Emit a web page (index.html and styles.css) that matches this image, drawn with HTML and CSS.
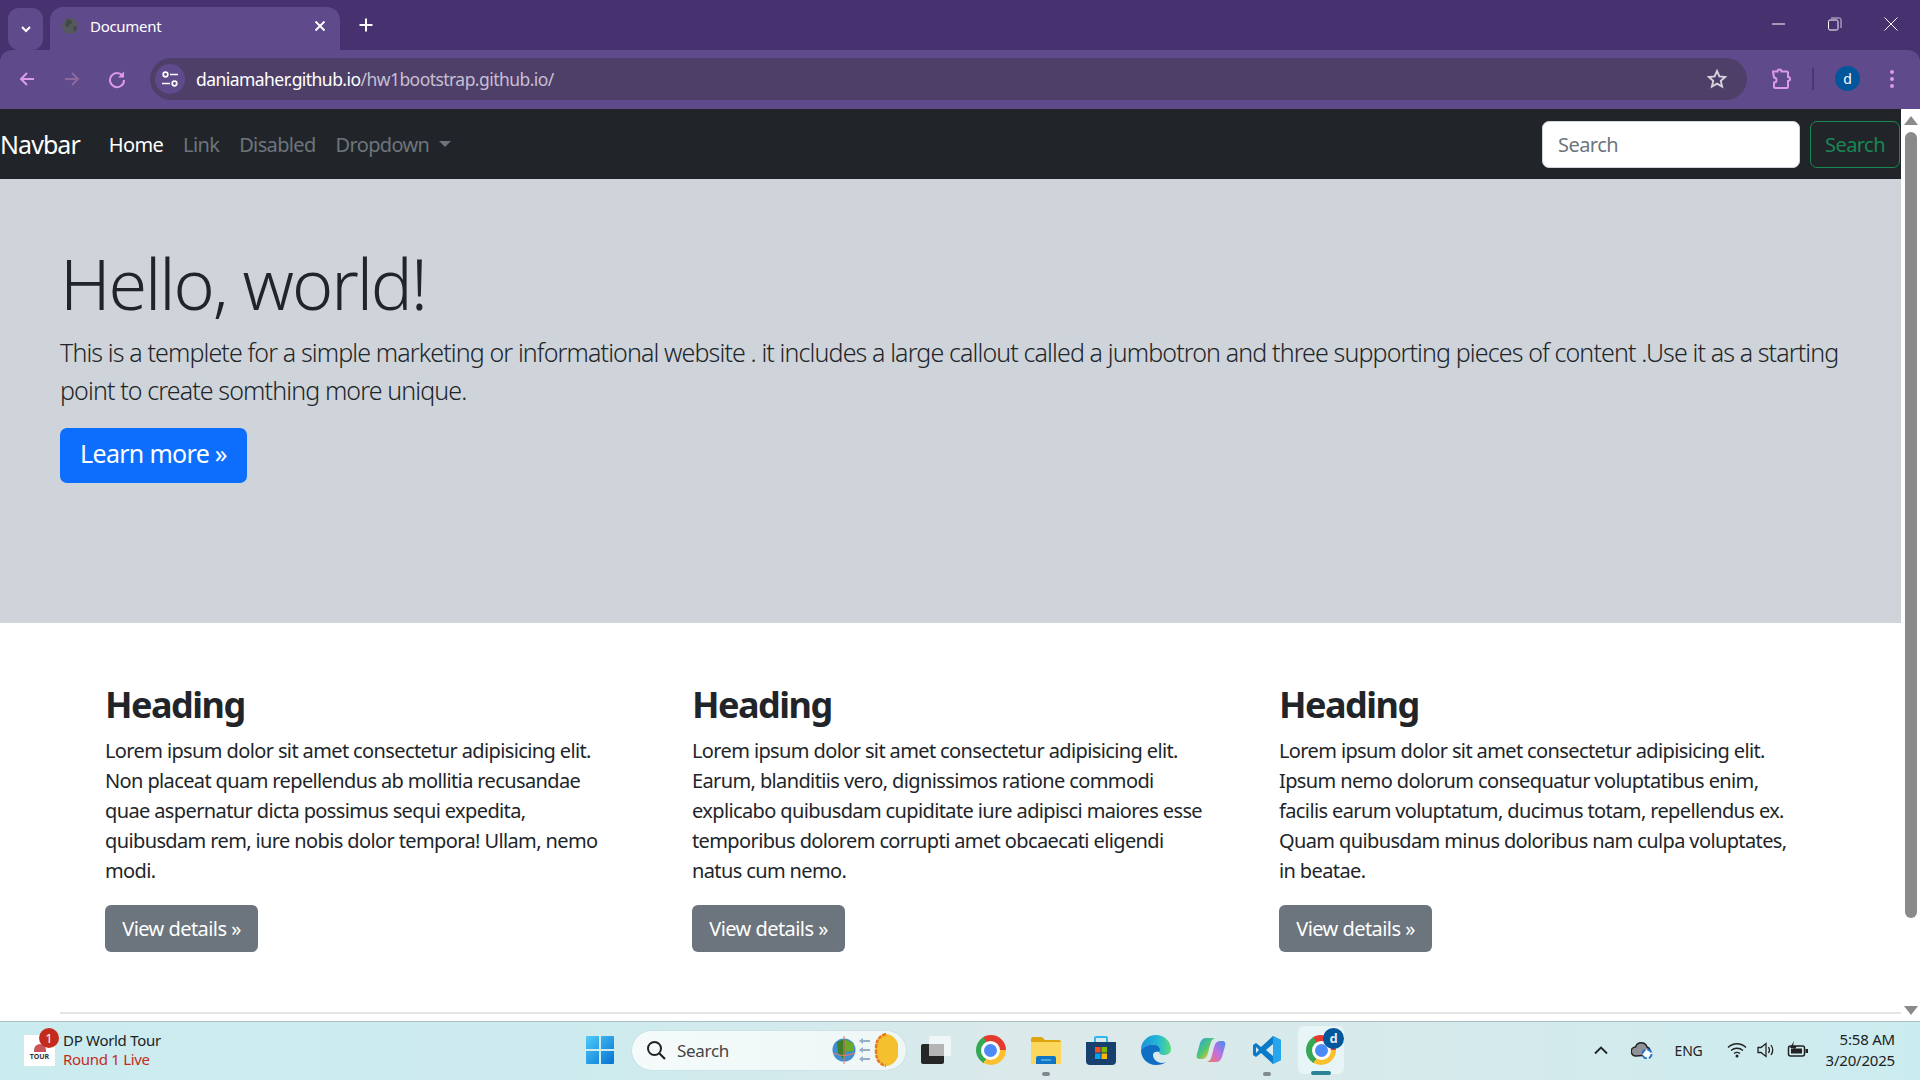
FILE: index.html
```html
<!DOCTYPE html>
<html lang="en">
<head>
<meta charset="utf-8">
<title>Document</title>
<link rel="stylesheet" href="styles.css">
</head>
<body>
<div class="window">
  <header class="tabstrip">
    <button class="tab-search"><svg width="14" height="14" viewBox="0 0 14 14"><path d="M3 5l4 4 4-4" fill="none" stroke="#fff" stroke-width="2"/></svg></button>
    <div class="tab">
      <svg class="favicon" width="18" height="18" viewBox="0 0 18 18"><circle cx="9" cy="9" r="8" fill="#55585c"/><path d="M6 2l4 1 1 3-3 2-1 3-3-3zM12 10l3-1 1 3-3 3z" fill="#3f4a48"/></svg>
      <span class="tab-title">Document</span>
      <svg class="tab-close" width="12" height="12" viewBox="0 0 12 12"><path d="M1.500 1.500l9 9M10.500 1.500l-9 9" stroke="#fff" stroke-width="1.800"/></svg>
    </div>
    <svg class="new-tab" width="16" height="16" viewBox="0 0 16 16"><path d="M8 1.500v13M1.500 8h13" stroke="#fff" stroke-width="2"/></svg>
    <div class="win-controls">
      <svg width="14" height="14" viewBox="0 0 14 14"><path d="M0 7h13" stroke="#fff" stroke-width="1"/></svg>
      <svg width="14" height="14" viewBox="0 0 14 14"><rect x=".5" y="3" width="9.500" height="10" rx="1.500" fill="none" stroke="#fff"/><path d="M3 1h8.500a1.500 1.500 0 0 1 1.500 1.500V11" fill="none" stroke="#cfc7dd"/></svg>
      <svg width="14" height="14" viewBox="0 0 14 14"><path d="M.5.500l13 13M13.500.500l-13 13" stroke="#fff" stroke-width="1"/></svg>
    </div>
  </header>

  <nav class="toolbar">
    <svg class="tool-icon" width="20" height="20" viewBox="0 0 20 20"><path d="M17 10H4M10 4l-6 6 6 6" fill="none" stroke="#dc9be6" stroke-width="2"/></svg>
    <svg class="tool-icon" width="20" height="20" viewBox="0 0 20 20"><path d="M3 10h13M10 4l6 6-6 6" fill="none" stroke="#8d689f" stroke-width="2"/></svg>
    <svg class="tool-icon" width="20" height="20" viewBox="0 0 20 20"><path d="M16 7.500A7 7 0 1 0 17 11" fill="none" stroke="#dc9be6" stroke-width="2"/><path d="M17 2.500v6h-6z" fill="#dc9be6"/></svg>
    <div class="omnibox">
      <span class="site-chip"><svg width="20" height="20" viewBox="0 0 20 20"><g fill="none" stroke="#fff" stroke-width="1.700"><circle cx="5.500" cy="5.500" r="2.300"/><circle cx="14.500" cy="14.500" r="2.300"/><path d="M10 5.500h8M2 14.500h8"/></g></svg></span>
      <span class="url">daniamaher.github.io<span class="url-path">/hw1bootstrap.github.io/</span></span>
      <svg class="star" width="22" height="22" viewBox="0 0 22 22"><path d="M11 3l2.400 5.400 5.800.6-4.400 3.900 1.300 5.700-5.100-3-5.100 3 1.300-5.700L2.800 9l5.800-.6z" fill="none" stroke="#d6d2dc" stroke-width="1.900"/></svg>
    </div>
    <svg class="puzzle" width="22" height="22" viewBox="0 0 22 22"><path d="M3 3.500h4.500a2 2 0 0 1 4 0H17a1 1 0 0 1 1 1v4.500a2 2 0 0 1 0 4V19a1 1 0 0 1-1 1H5a1 1 0 0 1-1-1v-4.500a2.500 2.500 0 0 0 0-5z" fill="none" stroke="#dc9be6" stroke-width="2"/></svg>
    <span class="tool-divider"></span>
    <span class="avatar">d</span>
    <svg class="kebab" width="6" height="20" viewBox="0 0 6 20"><g fill="#dc9be6"><circle cx="3" cy="3" r="2"/><circle cx="3" cy="10" r="2"/><circle cx="3" cy="17" r="2"/></g></svg>
  </nav>

  <div class="viewport">
    <main class="page">
      <div class="navbar">
        <a class="brand">Navbar</a>
        <ul class="nav-links">
          <li class="nav-active">Home</li>
          <li>Link</li>
          <li>Disabled</li>
          <li class="dropdown">Dropdown<span class="caret"></span></li>
        </ul>
        <form class="nav-search">
          <input class="search-input" type="text" placeholder="Search">
          <button class="search-btn" type="button">Search</button>
        </form>
      </div>

      <section class="hero">
        <h1>Hello, world!</h1>
        <p>This is a templete for a simple marketing or informational website . it includes a large callout called a jumbotron and three supporting pieces of content .Use it as a starting<br>point to create somthing more unique.</p>
        <a class="btn-primary">Learn more »</a>
      </section>

      <section class="columns">
        <article class="col">
          <h2>Heading</h2>
          <p>Lorem ipsum dolor sit amet consectetur adipisicing elit.<br>Non placeat quam repellendus ab mollitia recusandae<br>quae aspernatur dicta possimus sequi expedita,<br>quibusdam rem, iure nobis dolor tempora! Ullam, nemo<br>modi.</p>
          <a class="btn-secondary">View details »</a>
        </article>
        <article class="col">
          <h2>Heading</h2>
          <p>Lorem ipsum dolor sit amet consectetur adipisicing elit.<br>Earum, blanditiis vero, dignissimos ratione commodi<br>explicabo quibusdam cupiditate iure adipisci maiores esse<br>temporibus dolorem corrupti amet obcaecati eligendi<br>natus cum nemo.</p>
          <a class="btn-secondary">View details »</a>
        </article>
        <article class="col">
          <h2>Heading</h2>
          <p>Lorem ipsum dolor sit amet consectetur adipisicing elit.<br>Ipsum nemo dolorum consequatur voluptatibus enim,<br>facilis earum voluptatum, ducimus totam, repellendus ex.<br>Quam quibusdam minus doloribus nam culpa voluptates,<br>in beatae.</p>
          <a class="btn-secondary">View details »</a>
        </article>
      </section>
      <hr class="rule">
    </main>
    <aside class="scrollbar">
      <svg width="14" height="10" viewBox="0 0 14 10"><path d="M7 0l7 9H0z" fill="#8a8a8a"/></svg>
      <span class="thumb"></span>
      <svg class="scroll-down" width="14" height="10" viewBox="0 0 14 10"><path d="M0 0h14L7 9z" fill="#8a8a8a"/></svg>
    </aside>
  </div>

  <footer class="taskbar">
    <div class="news">
      <div class="news-logo">
        <span class="logo-mark"></span>
        <span class="logo-text">TOUR</span>
        <span class="news-badge">1</span>
      </div>
      <div class="news-text">
        <span>DP World Tour</span>
        <span class="news-live">Round 1 Live</span>
      </div>
    </div>

    <div class="task-center">
      <svg class="win-logo" width="30" height="30" viewBox="0 0 30 30"><defs><linearGradient id="w" x1="0" y1="0" x2="1" y2="1"><stop offset="0" stop-color="#4fcbfa"/><stop offset="1" stop-color="#0472d2"/></linearGradient></defs><path fill="url(#w)" d="M1 2a1 1 0 0 1 1-1h12v13H1zM16 1h12a1 1 0 0 1 1 1v12H16zM1 16h13v13H2a1 1 0 0 1-1-1zM16 16h13v12a1 1 0 0 1-1 1H16z"/></svg>
      <div class="task-search">
        <svg width="22" height="22" viewBox="0 0 22 22"><circle cx="9.500" cy="9.500" r="6.500" fill="none" stroke="#222" stroke-width="2"/><path d="M14.500 14.500l5.500 5.500" stroke="#222" stroke-width="2.200"/></svg>
        <span class="task-search-label">Search</span>
        <svg class="search-art" width="66" height="38" viewBox="0 0 66 38">
          <circle cx="12" cy="19" r="11.500" fill="#3f8fd0"/><path d="M5 11l8-3 9 5-2 7-7 1-1 8-6-7z" fill="#3c7f2a"/><path d="M13 8l9 5v7l-9 1z" fill="#6ba82e"/>
          <path d="M12 5v28" stroke="#ee7b62"/><path d="M1 22q11 5 22 0" fill="none" stroke="#ee7b62"/>
          <g fill="none" stroke="#97aec8" stroke-width="2"><path d="M28 10h10M28 19h10M28 28h10"/></g><path d="M31 7l-4 3 4 3M31 16l-4 3 4 3M31 25l-4 3 4 3" fill="#97aec8"/>
          <path d="M54 3a13 16 0 0 1 0 32q-7-2-9-8-1-3-1-8t1-8q2-6 9-8z" fill="#f5c02e"/>
          <path d="M54 3q-7 2-9 8-1 3-1 8t1 8q2 6 9 8" fill="none" stroke="#e8791f" stroke-width="2.500" stroke-dasharray="4 1"/>
        </svg>
      </div>
      <svg class="task-icon" width="30" height="30" viewBox="0 0 30 30"><rect x="0" y="9" width="23" height="20" rx="2" fill="#262626"/><rect x="8" y="1" width="22" height="20" rx="2" fill="#fff" fill-opacity=".6"/><rect x="8" y="9" width="15" height="12" fill="#b5b5b5"/></svg>
      <span class="task-slot"><span class="chrome"></span></span>
      <span class="task-slot"><svg width="30" height="28" viewBox="0 0 30 28"><path d="M0 3a2 2 0 0 1 2-2h9l3 3h14a2 2 0 0 1 2 2v4H0z" fill="#dfa50f"/><path d="M0 6h30v22H0z" fill="#fbd75d"/><path d="M5 22a2 2 0 0 1 2-2h16a2 2 0 0 1 2 2v6H5z" fill="#0f76c5"/><path d="M10 24h10" stroke="#8fd0f5"/></svg><span class="pip"></span></span>
      <span class="task-slot"><svg width="30" height="30" viewBox="0 0 30 30"><path d="M9 7V3a1 1 0 0 1 1-1h10a1 1 0 0 1 1 1v4" fill="none" stroke="#2fb6ee" stroke-width="2"/><path d="M0 7h30v19a4 4 0 0 1-4 4H4a4 4 0 0 1-4-4z" fill="#17406f"/><rect x="9" y="12" width="5.500" height="5.500" fill="#f25022"/><rect x="15.500" y="12" width="5.500" height="5.500" fill="#7fba00"/><rect x="9" y="18.500" width="5.500" height="5.500" fill="#00a4ef"/><rect x="15.500" y="18.500" width="5.500" height="5.500" fill="#ffb900"/></svg></span>
      <span class="task-slot"><svg width="30" height="30" viewBox="0 0 30 30"><defs><linearGradient id="e" x1="0" y1="0" x2="1" y2="0"><stop offset="0" stop-color="#1b93d8"/><stop offset=".55" stop-color="#22b7d8"/><stop offset="1" stop-color="#5fdc7c"/></linearGradient></defs><path d="M0 15C0 6 7 0 15 0c9 0 15 7 15 14 0 4-3 6-7 6-3 0-5-1-5-3 2-2 1-6-3-7C8 9 3 11 0 15z" fill="url(#e)"/><path d="M0 15c3-4 8-6 15-5 4 1 5 5 3 7-3-1-6 0-6 3 0 4 4 8 9 8 2 0 4-1 5-2-3 3-7 4-11 4C6 30 0 23 0 15z" fill="#0e6fc4"/></svg></span>
      <span class="task-slot"><svg width="30" height="30" viewBox="0 0 30 30"><defs><linearGradient id="c" x1="0" y1="0" x2="1" y2="1"><stop offset="0" stop-color="#2b9cf0"/><stop offset=".5" stop-color="#4fc86e"/><stop offset=".8" stop-color="#f2c13a"/><stop offset="1" stop-color="#f08040"/></linearGradient><linearGradient id="c2" x1="1" y1="0" x2="0" y2="1"><stop offset="0" stop-color="#3f8fee"/><stop offset=".5" stop-color="#c26fe0"/><stop offset="1" stop-color="#f07a5c"/></linearGradient></defs><path d="M10 3h9c-3 1-4 3-5 7l-2 8c-1 4-3 6-6 6H4c-3 0-4-2-3-5l3-11c1-3 3-5 6-5z" fill="url(#c)"/><path d="M20 27h-9c3-1 4-3 5-7l2-8c1-4 3-6 6-6h2c3 0 4 2 3 5l-3 11c-1 3-3 5-6 5z" fill="url(#c2)"/></svg></span>
      <span class="task-slot"><svg width="30" height="30" viewBox="0 0 30 30"><path d="M21 1l8 4v20l-8 4-12-11-5 4-3-2v-10l3-2 5 4z" fill="#0a7bc8"/><path d="M21 1l8 4v20l-8 4z" fill="#27a6ee"/><path d="M21 9l-7 6 7 6z" fill="#d8ebf0"/><path d="M4 12v6l3-3z" fill="#d8ebf0"/></svg><span class="pip"></span></span>
      <span class="task-slot task-active"><span class="chrome"></span><span class="profile-badge">d</span><span class="pip pip-active"></span></span>
    </div>

    <div class="tray">
      <svg class="tray-chevron" width="16" height="10" viewBox="0 0 16 10"><path d="M2 8.500l6-6 6 6" fill="none" stroke="#222" stroke-width="1.800"/></svg>
      <svg class="tray-cloud" width="22" height="18" viewBox="0 0 22 18"><path d="M5 15a4.500 4.500 0 0 1-.5-9A6 6 0 0 1 16 6a4.500 4.500 0 0 1 1 8z" fill="#8f9296" stroke="#222" stroke-width="1.500"/><circle cx="16" cy="13" r="4.500" fill="#fff" stroke="#1d6fd1" stroke-width="1.800" stroke-dasharray="5 2"/></svg>
      <span class="tray-lang">ENG</span>
      <svg class="tray-wifi" width="20" height="16" viewBox="0 0 20 16"><g fill="none" stroke="#222" stroke-width="1.400"><path d="M1 5.500c5-5 13-5 18 0M4 8.500c3.500-3 8.500-3 12 0M7 11.500c2-1.500 4-1.500 6 0"/></g><circle cx="10" cy="14" r="1.500" fill="#222"/></svg>
      <svg width="20" height="16" viewBox="0 0 20 16"><path d="M1 5.500h3l5-4v13l-5-4H1z" fill="none" stroke="#222" stroke-width="1.300"/><path d="M11.500 5q2 3 0 6M14 3q3.500 5 0 10" fill="none" stroke="#222" stroke-width="1.300"/></svg>
      <svg width="22" height="18" viewBox="0 0 22 18"><rect x="1.500" y="5" width="16" height="10" rx="2" fill="none" stroke="#222" stroke-width="1.500"/><rect x="4" y="7.500" width="11" height="5" fill="#222"/><rect x="18.500" y="8" width="2.500" height="4" fill="#222"/><path d="M7 0L3 7h4l-2 5 5-7H6z" fill="#222"/></svg>
      <div class="clock"><span>5:58 AM</span><span>3/20/2025</span></div>
    </div>
  </footer>
</div>
</body>
</html>
```

FILE: styles.css
```css
* { box-sizing: border-box; }
html, body { margin: 0; height: 100%; overflow: hidden; }
body { font-family: "Noto Sans", "Open Sans", sans-serif; color: #212529; }
p, h1, h2, ul { margin: 0; padding: 0; }
.window { display: flex; flex-direction: column; height: 1080px; width: 1920px; background: #47326f; }

/* tab strip */
.tabstrip { height: 50px; flex: none; background: #47326f; display: flex; align-items: flex-end; padding-left: 8px; }
.tab-search { width: 35px; height: 42px; align-self: flex-start; margin-top: 8px; border: 0; border-radius: 11px; background: #5f4a8b; display: flex; align-items: center; justify-content: center; padding: 0; }
.tab { width: 290px; height: 43px; margin-left: 7px; background: #5f4a8b; border-radius: 13px 13px 0 0; display: flex; align-items: center; padding: 0 14px 6px 11px; color: #fff; font-size: 15px; letter-spacing: -.3px; }
.favicon { margin-right: 11px; }
.tab-title { flex: 1; }
.new-tab { align-self: center; margin-left: 18px; }
.win-controls { margin-left: auto; align-self: flex-start; display: flex; gap: 42px; padding: 17px 22px 0 0; }

/* toolbar */
.toolbar { height: 59px; flex: none; background: #5f4a8b; border-radius: 12px 12px 0 0; display: flex; align-items: center; padding: 0 0 2px 17px; gap: 25px; }
.tool-icon { flex: none; }
.omnibox { width: 1597px; height: 42px; margin-left: -2px; border-radius: 21px; background: #4e3f68; display: flex; align-items: center; padding: 0 19px 0 5px; margin-right: -2px; }
.site-chip { width: 30px; height: 30px; border-radius: 50%; background: #5f4a8b; display: flex; align-items: center; justify-content: center; margin-right: 11px; }
.url { flex: 1; font-size: 17.500px; color: #fff; letter-spacing: -.55px; }
.url-path { color: #c6bfd2; }
.tool-divider { width: 2px; height: 22px; background: #4b3573; margin-left: -5px; }
.avatar { width: 25px; height: 25px; border-radius: 50%; background: #02569b; color: #fff; font-size: 14px; display: flex; align-items: center; justify-content: center; margin-left: -4px; }
.kebab { margin-left: 4px; }

/* viewport */
.viewport { flex: 1; display: flex; min-height: 0; background: #fff; }
.page { flex: 1; min-width: 0; overflow: hidden; }
.scrollbar { width: 19px; display: flex; flex-direction: column; align-items: center; padding: 7px 0 5px; background: #fff; }
.thumb { width: 12px; height: 786px; margin-top: 6px; background: #8a8a8a; border-radius: 6px; }
.scroll-down { margin-top: auto; }

/* navbar */
.navbar { height: 70px; background: #212529; display: flex; align-items: center; }
.brand { font-size: 25px; color: #fff; margin-right: 29px; letter-spacing: -.95px; }
.nav-links { list-style: none; display: flex; gap: 20px; font-size: 20px; color: #6c757d; letter-spacing: -.65px; }
.nav-active { color: #fff; }
.dropdown { display: flex; align-items: center; }
.caret { width: 0; height: 0; border: 6px solid transparent; border-top-color: #6c757d; border-bottom: 0; margin-left: 10px; }
.nav-search { margin-left: auto; display: flex; gap: 10px; padding-right: 1px; }
.search-input { width: 258px; height: 47px; border: 1px solid #ced4da; border-radius: 7px; padding: 0 15px; font: inherit; font-size: 20px; letter-spacing: -.55px; background: #fff; }
.search-input::placeholder { color: #6c757d; opacity: 1; }
.search-btn { width: 90px; height: 47px; border: 1px solid #198754; border-radius: 7px; background: transparent; color: #198754; font: inherit; font-size: 20px; letter-spacing: -.55px; padding: 0; }

/* hero */
.hero { height: 444px; background: #ced4da; padding: 62px 60px 0; }
.hero h1 { font-size: 70px; font-weight: 300; line-height: 84px; letter-spacing: -2.100px; margin-bottom: 8px; }
.hero p { font-size: 25px; font-weight: 300; line-height: 38px; letter-spacing: -.88px; margin-bottom: 19px; white-space: nowrap; }
.btn-primary { display: inline-block; height: 55px; width: 187px; line-height: 51px; text-align: center; background: #0d6efd; color: #fff; border-radius: 7px; font-size: 25px; letter-spacing: -.7px; }

/* columns */
.columns { display: grid; grid-template-columns: repeat(3, 587px); padding: 58px 0 0 105px; }
.col h2 { font-size: 36px; font-weight: 700; line-height: 48px; letter-spacing: -1.500px; margin-bottom: 7px; }
.col p { font-size: 20px; line-height: 30px; letter-spacing: -.62px; margin-bottom: 19px; white-space: nowrap; }
.btn-secondary { display: inline-block; width: 153px; height: 47px; line-height: 47px; text-align: center; background: #6c757d; color: #fff; border-radius: 6px; font-size: 20px; letter-spacing: -.55px; }
.rule { height: 2px; border: 0; margin: 60px 0 0 60px; background: #e4e5e7; }

/* taskbar */
.taskbar { height: 59px; flex: none; background: linear-gradient(90deg, #cbecef 0%, #cdebee 30%, #dce9ea 55%, #d6eaec 75%, #cbecef 100%); border-top: 1px solid #a9bfc3; display: flex; align-items: center; padding-bottom: 2px; }
.news { width: 585px; display: flex; align-items: center; padding-left: 24px; flex: none; }
.news-logo { width: 31px; height: 31px; background: #fff; position: relative; display: flex; flex-direction: column; align-items: center; justify-content: flex-end; padding-bottom: 5px; margin-right: 8px; }
.logo-mark { width: 12px; height: 8px; border-radius: 6px 6px 0 0; background: #c9555a; margin-bottom: 1px; }
.logo-text { font-size: 7px; font-weight: 700; line-height: 8px; color: #333; }
.news-badge { position: absolute; top: -7px; right: -4px; width: 20px; height: 20px; border-radius: 50%; background: #c42b1c; color: #fff; font-size: 13px; line-height: 20px; text-align: center; }
.news-text { display: flex; flex-direction: column; font-size: 15px; line-height: 19px; letter-spacing: -.3px; color: #222; }
.news-live { color: #c42b1c; }
.task-center { display: flex; align-items: center; flex: none; }
.win-logo { margin-right: 17px; }
.task-search { width: 274px; height: 39px; border-radius: 20px; background: linear-gradient(90deg, #f5fbfb, #eef6f6); box-shadow: 0 0 1px #9ab; display: flex; align-items: center; padding: 0 8px 0 13px; margin-right: 15px; }
.task-search-label { flex: 1; font-size: 17px; color: #444; padding-left: 10px; letter-spacing: -.3px; }
.task-icon { margin-right: 12px; }
.task-slot { width: 55.200px; height: 50px; display: flex; align-items: center; justify-content: center; position: relative; }
.chrome { width: 30px; height: 30px; border-radius: 50%; background: conic-gradient(from 330deg, #e33b2e 0 120deg, #fbc02d 120deg 240deg, #34a853 240deg 360deg); display: flex; align-items: center; justify-content: center; }
.chrome::after { content: ""; width: 13px; height: 13px; border-radius: 50%; background: #4c8bf5; border: 3px solid #fff; box-sizing: content-box; }
.pip { position: absolute; bottom: -1px; left: 50%; width: 8px; height: 4px; margin-left: -4px; border-radius: 2px; background: #7f8a8e; }
.task-active { width: 46px; height: 48px; margin-left: 4px; border-radius: 6px; background: #e8f5f6; }
.pip-active { width: 20px; margin-left: -10px; background: #2a8496; }
.profile-badge { position: absolute; top: 2px; right: 0; width: 21px; height: 21px; border-radius: 50%; background: #02569b; color: #dfe9f2; font-size: 13px; font-weight: 700; line-height: 20px; text-align: center; }
.tray { margin-left: auto; display: flex; align-items: center; gap: 10px; padding-right: 25px; color: #222; }
.tray-cloud { margin-left: 12px; }
.tray-lang { font-size: 14px; margin-left: 12px; letter-spacing: -.2px; }
.tray-wifi { margin-left: 14px; }
.clock { display: flex; flex-direction: column; align-items: flex-end; font-size: 15px; line-height: 21px; letter-spacing: -.2px; margin-left: 7px; }
```
